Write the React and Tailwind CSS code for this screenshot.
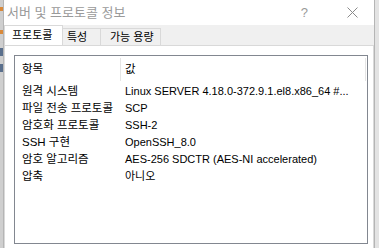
import React from "react";

const rows = [
  ["원격 시스템", "Linux SERVER 4.18.0-372.9.1.el8.x86_64 #..."],
  ["파일 전송 프로토콜", "SCP"],
  ["암호화 프로토콜", "SSH-2"],
  ["SSH 구현", "OpenSSH_8.0"],
  ["암호 알고리즘", "AES-256 SDCTR (AES-NI accelerated)"],
  ["압축", "아니오"],
];

export default function App() {
  const font = { fontFamily: '"Liberation Sans", "Noto Sans CJK KR", sans-serif' };
  return (
    <div className="w-[379px] h-[248px] flex bg-[#d9d9d9] overflow-hidden" style={font}>
      {/* background strip on the left */}
      <div className="w-[3px] flex flex-col bg-[#cfcfcf]">
        <div className="h-[7px]" />
        <div className="h-[4px] bg-[#d9893a]" />
        <div className="h-[19px]" />
        <div className="h-[4px] bg-[#d9893a]" />
        <div className="h-[14px]" />
        <div className="h-[8px] bg-[#5a6f8c]" />
        <div className="h-[8px]" />
        <div className="h-[8px] bg-[#5a6f8c]" />
      </div>
      {/* window */}
      <div className="w-[372px] flex flex-col bg-white border-l border-r border-[#b5b5b5]">
        {/* title bar */}
        <div className="h-[25px] flex items-center bg-white">
          <span className="ml-[3px] text-[13px] text-[#9a9a9a] leading-none">서버 및 프로토콜 정보</span>
          <span className="ml-auto text-[13px] text-[#9a9a9a] leading-none mr-[39px]">?</span>
          <svg width="11" height="11" viewBox="0 0 11 11" className="mr-[16px]">
            <path d="M0.5 0.5 L10.5 10.5 M10.5 0.5 L0.5 10.5" stroke="#8a8a8a" strokeWidth="1" />
          </svg>
        </div>
        {/* tab strip */}
        <div className="h-[20px] flex items-end bg-[#f0f0f0]">
          <div className="h-[20px] w-[59px] bg-white border-l border-t border-r border-[#d9d9d9] flex items-center pl-[7px] text-[11px] text-black">
            프로토콜
          </div>
          <div className="h-[17px] w-[38px] bg-[#f0f0f0] border-t border-r border-[#d9d9d9] flex items-center pl-[4px] text-[11px] text-black">
            특성
          </div>
          <div className="h-[17px] w-[60px] bg-[#f0f0f0] border-t border-r border-[#d9d9d9] flex items-center pl-[9px] text-[11px] text-black">
            가능 용량
          </div>
        </div>
        {/* tab page */}
        <div className="flex-1 bg-white border-l border-r border-t border-[#d9d9d9] pl-[9px] pr-[5px] pt-[9px] pb-[4px] flex">
          <div className="flex-1 border border-[#828790] flex flex-col">
            <div className="h-[27px] flex items-stretch text-[11.5px] text-black">
              <div className="w-[105px] flex items-center pl-[7px]">항목</div>
              <div className="w-px bg-[#e5e5e5] my-[2px]" />
              <div className="flex-1 flex items-center pl-[4px]">값</div>
              <div className="w-px bg-[#e5e5e5] my-[2px] mr-[1px]" />
            </div>
            {rows.map(([k, v]) => (
              <div key={k} className="h-[17px] flex items-center text-black">
                <div className="w-[106px] pl-[7px] whitespace-nowrap text-[11.5px]">{k}</div>
                <div className="pl-[4px] whitespace-nowrap text-[11px]">{v}</div>
              </div>
            ))}
          </div>
        </div>
      </div>
      {/* right background */}
      <div className="flex-1 bg-[#e3e3e3]" />
    </div>
  );
}
